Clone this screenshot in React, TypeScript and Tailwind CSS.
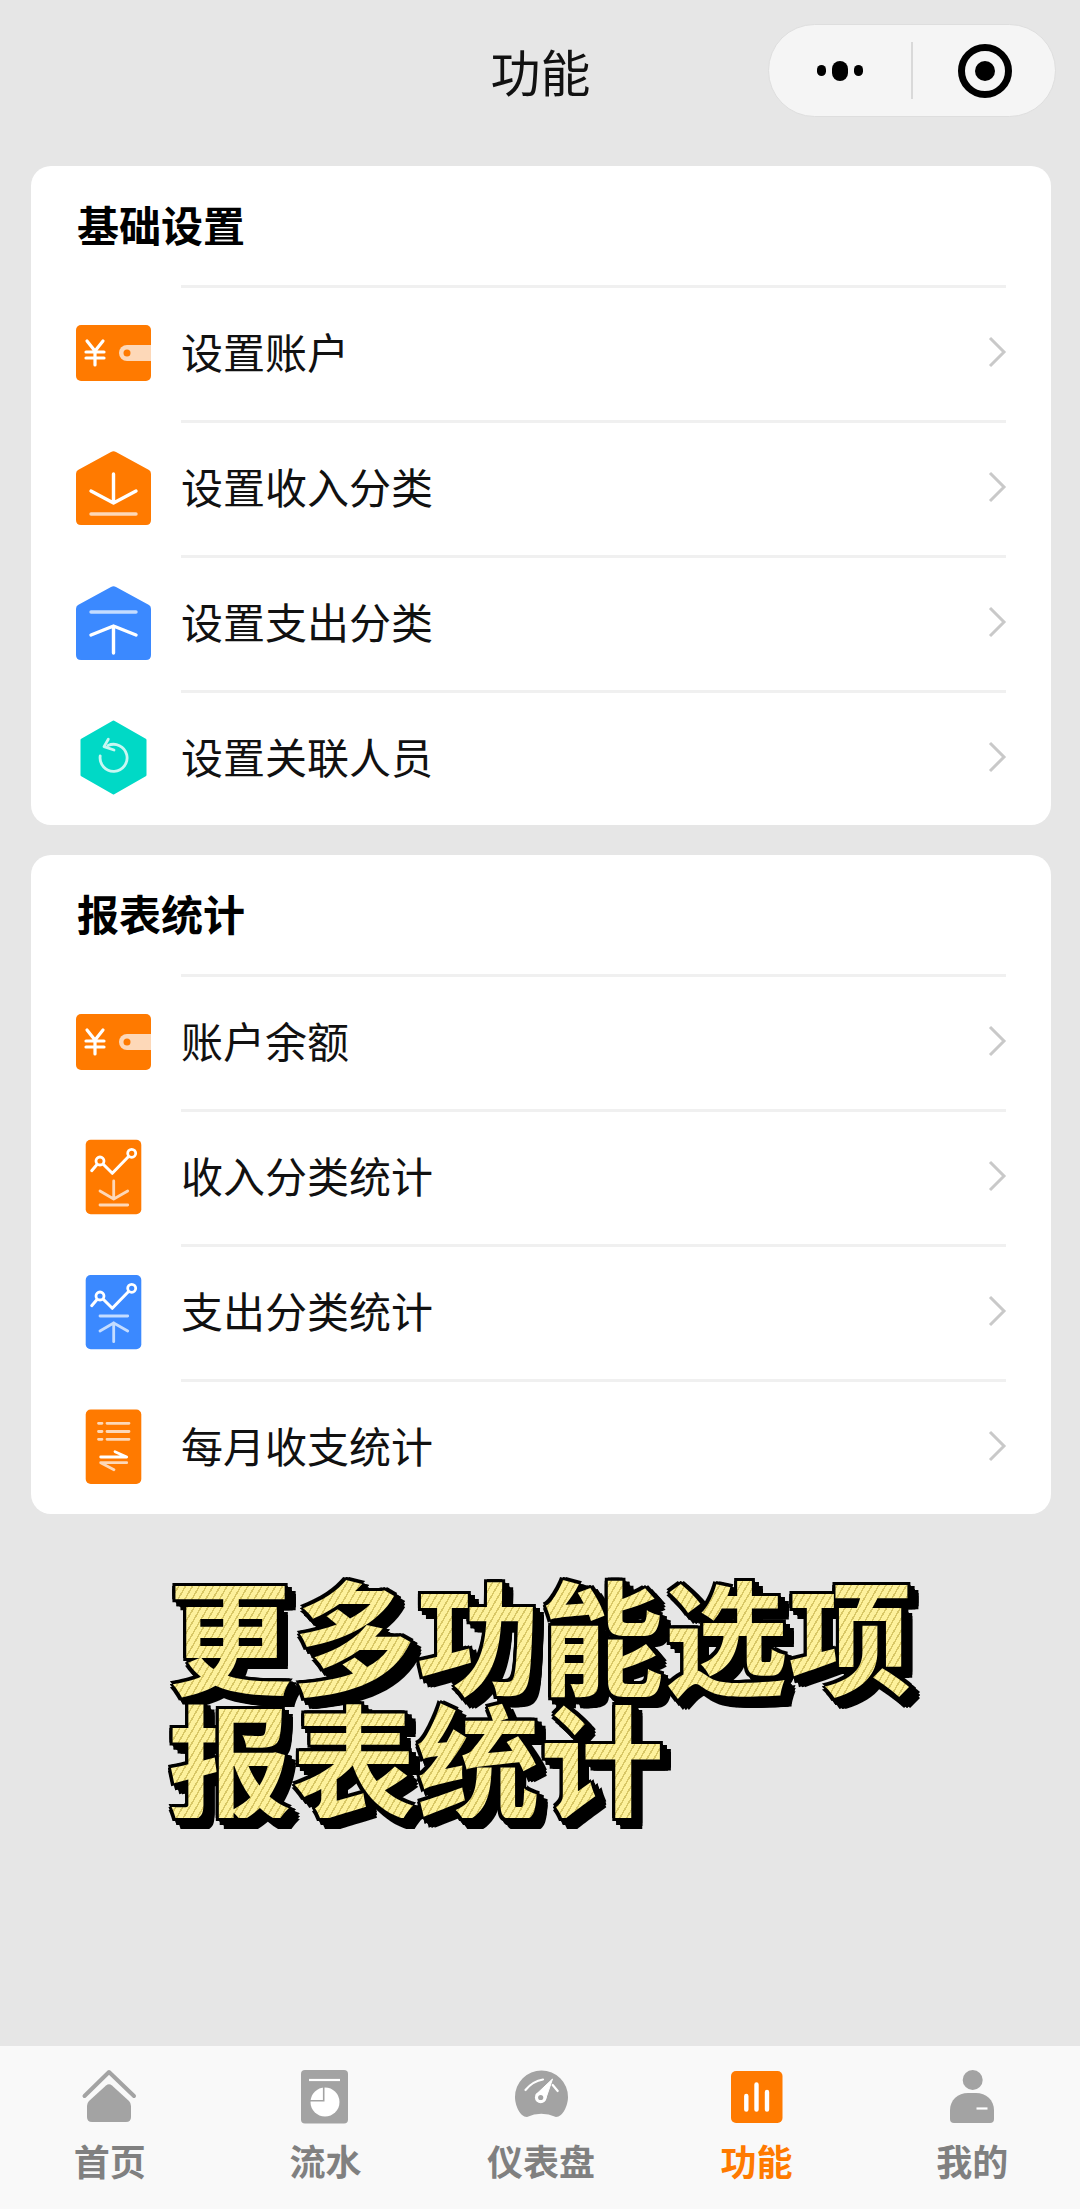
import React from 'react';

const ORANGE = '#ff7a00';
const BLUE = '#3b89ff';
const PEACH = '#fdd8b8';
const SKY = '#c4dcff';

function Box({ children }: { children: React.ReactNode }) {
  return (
    <svg width="80" height="80" viewBox="0 0 80 80" fill="none" strokeLinecap="round" strokeLinejoin="round" className="shrink-0">
      {children}
    </svg>
  );
}

function WalletIcon() {
  return (
    <Box>
      <rect x="2" y="12" width="75" height="56" rx="5" fill={ORANGE} />
      <path d="M13 28 L21 38 L29 28 M12 39 H30 M12 45 H30 M21 38 V52" stroke="#fff" strokeWidth="3.2" />
      <path d="M77 32 H53 A8 8 0 0 0 53 48 H77 Z" fill={PEACH} />
      <circle cx="53" cy="40" r="3.5" fill={ORANGE} />
    </Box>
  );
}

const housePath = 'M37 4 Q39.5 2.6 42 4 L75 22 Q77 23.2 77 26 V72 Q77 77 72 77 H7 Q2 77 2 72 V26 Q2 23.2 4 22 Z';

function IncomeIcon() {
  return (
    <Box>
      <path d={housePath} fill={ORANGE} />
      <path d="M39.5 26 V55 M17 43 L39.5 55 L62 43" stroke="#fff" strokeWidth="3.4" />
      <path d="M17 66 H62" stroke={PEACH} strokeWidth="3.4" />
    </Box>
  );
}

function ExpenseIcon() {
  return (
    <Box>
      <path d={housePath} fill={BLUE} />
      <path d="M17 29 H62" stroke={SKY} strokeWidth="3.4" />
      <path d="M39.5 43 V70 M17 52 L39.5 43 L62 52" stroke="#fff" strokeWidth="3.4" />
    </Box>
  );
}

function PersonIcon() {
  return (
    <Box>
      <path d="M39.5 4 L71 22 V57 L39.5 75 L8 57 V22 Z" fill="#00d9c6" stroke="#00d9c6" strokeWidth="3" />
      <path d="M34 27.5 A13.5 13.5 0 1 1 26.2 38" stroke="#c8f7f2" strokeWidth="2.8" />
      <path d="M34.3 21.3 L30 28.6 L40 32" stroke="#c8f7f2" strokeWidth="2.8" />
    </Box>
  );
}

function TrendLine({ fill }: { fill: string }) {
  return (
    <>
      <path d="M17.7 33.7 L26 24 L38.3 36.3 L57.7 16.3" stroke="#fff" strokeWidth="3" />
      <circle cx="26" cy="24" r="4" fill={fill} stroke="#fff" strokeWidth="2.8" />
      <circle cx="57.7" cy="16.3" r="4" fill={fill} stroke="#fff" strokeWidth="2.8" />
    </>
  );
}

function IncomeChartIcon() {
  return (
    <Box>
      <rect x="11.7" y="2.7" width="55.6" height="74.6" rx="5" fill={ORANGE} />
      <TrendLine fill={ORANGE} />
      <path d="M39.7 44 V62 M26 54 L39.7 62 L53.7 54 M26 68 H53.7" stroke={PEACH} strokeWidth="2.8" />
    </Box>
  );
}

function ExpenseChartIcon() {
  return (
    <Box>
      <rect x="11.7" y="3" width="55.6" height="74.3" rx="5" fill={BLUE} />
      <TrendLine fill={BLUE} />
      <path d="M26 44 H53.7 M39.7 51 V69.7 M26 59 L39.7 51 L53.7 59" stroke={SKY} strokeWidth="2.8" />
    </Box>
  );
}

function MonthlyIcon() {
  return (
    <Box>
      <rect x="11.7" y="2.5" width="55.6" height="74.5" rx="5" fill={ORANGE} />
      <path d="M24.5 16.3 H28 M33 16.3 H55 M24.5 24.5 H28 M33 24.5 H55 M24.5 32.3 H28 M33 32.3 H55" stroke={PEACH} strokeWidth="2.8" />
      <path d="M26.7 50 H52.7 L41 44.7" stroke="#fff" strokeWidth="2.8" />
      <path d="M52.7 55.7 H26.7 L40 62.7" stroke={PEACH} strokeWidth="2.8" />
    </Box>
  );
}

function TabSvg({ children }: { children: React.ReactNode }) {
  return (
    <svg width="100" height="75" viewBox="0 0 100 75" fill="none" strokeLinecap="round" strokeLinejoin="round">
      {children}
    </svg>
  );
}

const GRAY = '#a3a3a3';

function HomeTab() {
  return (
    <TabSvg>
      <path d="M24.5 36 L49 12 L74 36" stroke={GRAY} strokeWidth="4" />
      <path d="M46 25.5 Q49 22.8 52 25.5 L69 41 Q71 43 71 46 V57 Q71 62 66 62 H32 Q27 62 27 57 V46 Q27 43 29 41 Z" fill={GRAY} />
    </TabSvg>
  );
}

function FlowTab() {
  return (
    <TabSvg>
      <rect x="26" y="10" width="47" height="53.5" rx="4" fill={GRAY} />
      <path d="M34 20 H65" stroke="#fff" strokeWidth="2.2" strokeLinecap="butt" />
      <circle cx="50" cy="42" r="14.5" fill="#fff" />
      <path d="M48.7 27 V40.7 H35" stroke={GRAY} strokeWidth="1.6" strokeLinecap="butt" strokeLinejoin="miter" />
    </TabSvg>
  );
}

function GaugeTab() {
  return (
    <TabSvg>
      <path d="M36 57 Q50 50.5 65 57 C72 57 77 45 77 37 A26.5 26.5 0 0 0 24 37 C24 45 29 57 36 57 Z" fill={GRAY} />
      <path d="M34.5 30 Q42 21 52 19.5 M61.7 25 L66.7 31" stroke="#fff" strokeWidth="2.2" />
      <path d="M45 34.5 L61.5 19 L54.5 39.5 Z" fill="#fff" stroke="#fff" strokeWidth="1" />
      <circle cx="49.7" cy="37.5" r="5.8" fill="#fff" />
      <circle cx="49.7" cy="37.5" r="2.6" fill={GRAY} />
    </TabSvg>
  );
}

function FuncTab() {
  return (
    <TabSvg>
      <rect x="24" y="11" width="51.5" height="52" rx="5" fill={ORANGE} />
      <path d="M39.3 36 V49.5 M49.5 24.5 V49.5 M60 32 V49.5" stroke="#fff" strokeWidth="4.4" />
    </TabSvg>
  );
}

function MeTab() {
  return (
    <TabSvg>
      <circle cx="50.7" cy="20" r="10" fill={GRAY} />
      <path d="M28 59 V50 C28 40 36 33 46 33 H54 C64 33 72 40 72 50 V59 Q72 63 68 63 H32 Q28 63 28 59 Z" fill={GRAY} />
      <path d="M54.5 48.5 H65.5" stroke="#fff" strokeWidth="2.2" strokeLinecap="butt" />
    </TabSvg>
  );
}

const sections = [
  {
    title: '基础设置',
    rows: [
      { label: '设置账户', icon: <WalletIcon /> },
      { label: '设置收入分类', icon: <IncomeIcon /> },
      { label: '设置支出分类', icon: <ExpenseIcon /> },
      { label: '设置关联人员', icon: <PersonIcon /> },
    ],
  },
  {
    title: '报表统计',
    rows: [
      { label: '账户余额', icon: <WalletIcon /> },
      { label: '收入分类统计', icon: <IncomeChartIcon /> },
      { label: '支出分类统计', icon: <ExpenseChartIcon /> },
      { label: '每月收支统计', icon: <MonthlyIcon /> },
    ],
  },
];

const tabs = [
  { label: '首页', icon: <HomeTab /> },
  { label: '流水', icon: <FlowTab /> },
  { label: '仪表盘', icon: <GaugeTab /> },
  { label: '功能', icon: <FuncTab />, active: true },
  { label: '我的', icon: <MeTab /> },
];

function Chevron() {
  return (
    <svg width="20" height="32" viewBox="0 0 20 32" fill="none" className="-mt-1 -mr-px shrink-0">
      <path d="M3 2 L17 16 L3 30" stroke="#c9c9c9" strokeWidth="3" />
    </svg>
  );
}

export default function App() {
  return (
    <div className="flex h-[2209px] w-[1080px] flex-col overflow-hidden bg-[#e6e6e6] font-['Noto_Sans_CJK_SC','Noto_Sans',sans-serif] text-black">
      <header className="grid h-[166px] shrink-0 grid-cols-3 pt-6">
        <div />
        <h1 className="h-[93px] pl-[1px] text-center text-[50px] leading-[93px] font-normal text-[#111]">功能</h1>
        <div className="flex justify-end pr-[24px]">
          <div className="flex h-[93px] w-[288px] items-center rounded-[47px] border border-[#dedede] bg-[#f5f5f5]">
            <div className="flex w-[142px] items-center justify-center gap-[6px]">
              <span className="h-[11px] w-[9px] rounded-full bg-black" />
              <span className="h-[20px] w-[16px] rounded-full bg-black" />
              <span className="h-[11px] w-[9px] rounded-full bg-black" />
            </div>
            <span className="h-[57px] w-[2px] bg-[#d9d9d9]" />
            <div className="flex flex-1 items-center justify-center pl-[2px]">
              <span className="flex h-[54px] w-[54px] items-center justify-center rounded-full border-[7px] border-black">
                <span className="h-[20px] w-[20px] rounded-full bg-black" />
              </span>
            </div>
          </div>
        </div>
      </header>

      <main className="flex-1 pr-[29px] pl-[31px]">
        <div className="flex flex-col gap-[30px]">
          {sections.map(section => (
            <section key={section.title} className="rounded-[20px] bg-white pr-[45px] pl-[43px]">
              <h2 className="h-[119px] pt-[27px] pl-[3px] text-[42px] leading-[62px] font-bold">{section.title}</h2>
              {section.rows.map(row => (
                <div key={row.label} className="flex h-[135px] items-center">
                  {row.icon}
                  <div className="ml-[27px] flex h-full flex-1 items-center justify-between border-t-[3px] border-[#f0f0f0]">
                    <span className="-mt-[6px] text-[42px] leading-none text-[#111]">{row.label}</span>
                    <Chevron />
                  </div>
                </div>
              ))}
            </section>
          ))}
        </div>

        <div className="mt-[56px] pl-[137px] text-[124px] leading-[124px] font-bold">
          <div className="w-fit bg-[repeating-linear-gradient(120deg,#fdf19c_0,#fdf19c_4.5px,#d8c766_4.5px,#d8c766_6px)] bg-clip-text text-transparent [filter:drop-shadow(3px_0_0_#000)_drop-shadow(-3px_0_0_#000)_drop-shadow(0_3px_0_#000)_drop-shadow(0_-3px_0_#000)_drop-shadow(4px_4px_0_#000)_drop-shadow(4px_4px_0_#000)]">
            更多功能选项
            <br />
            报表统计
          </div>
        </div>
      </main>

      <nav className="flex h-[163px] shrink-0 bg-[#f9f9f9] pt-[14px] pl-[2px]">
        {tabs.map(tab => (
          <div key={tab.label} className="flex flex-1 flex-col items-center">
            {tab.icon}
            <span className={`text-[36px] leading-[50px] font-bold ${tab.active ? 'text-[#ff7a00]' : 'text-[#808080]'}`}>
              {tab.label}
            </span>
          </div>
        ))}
      </nav>
    </div>
  );
}
